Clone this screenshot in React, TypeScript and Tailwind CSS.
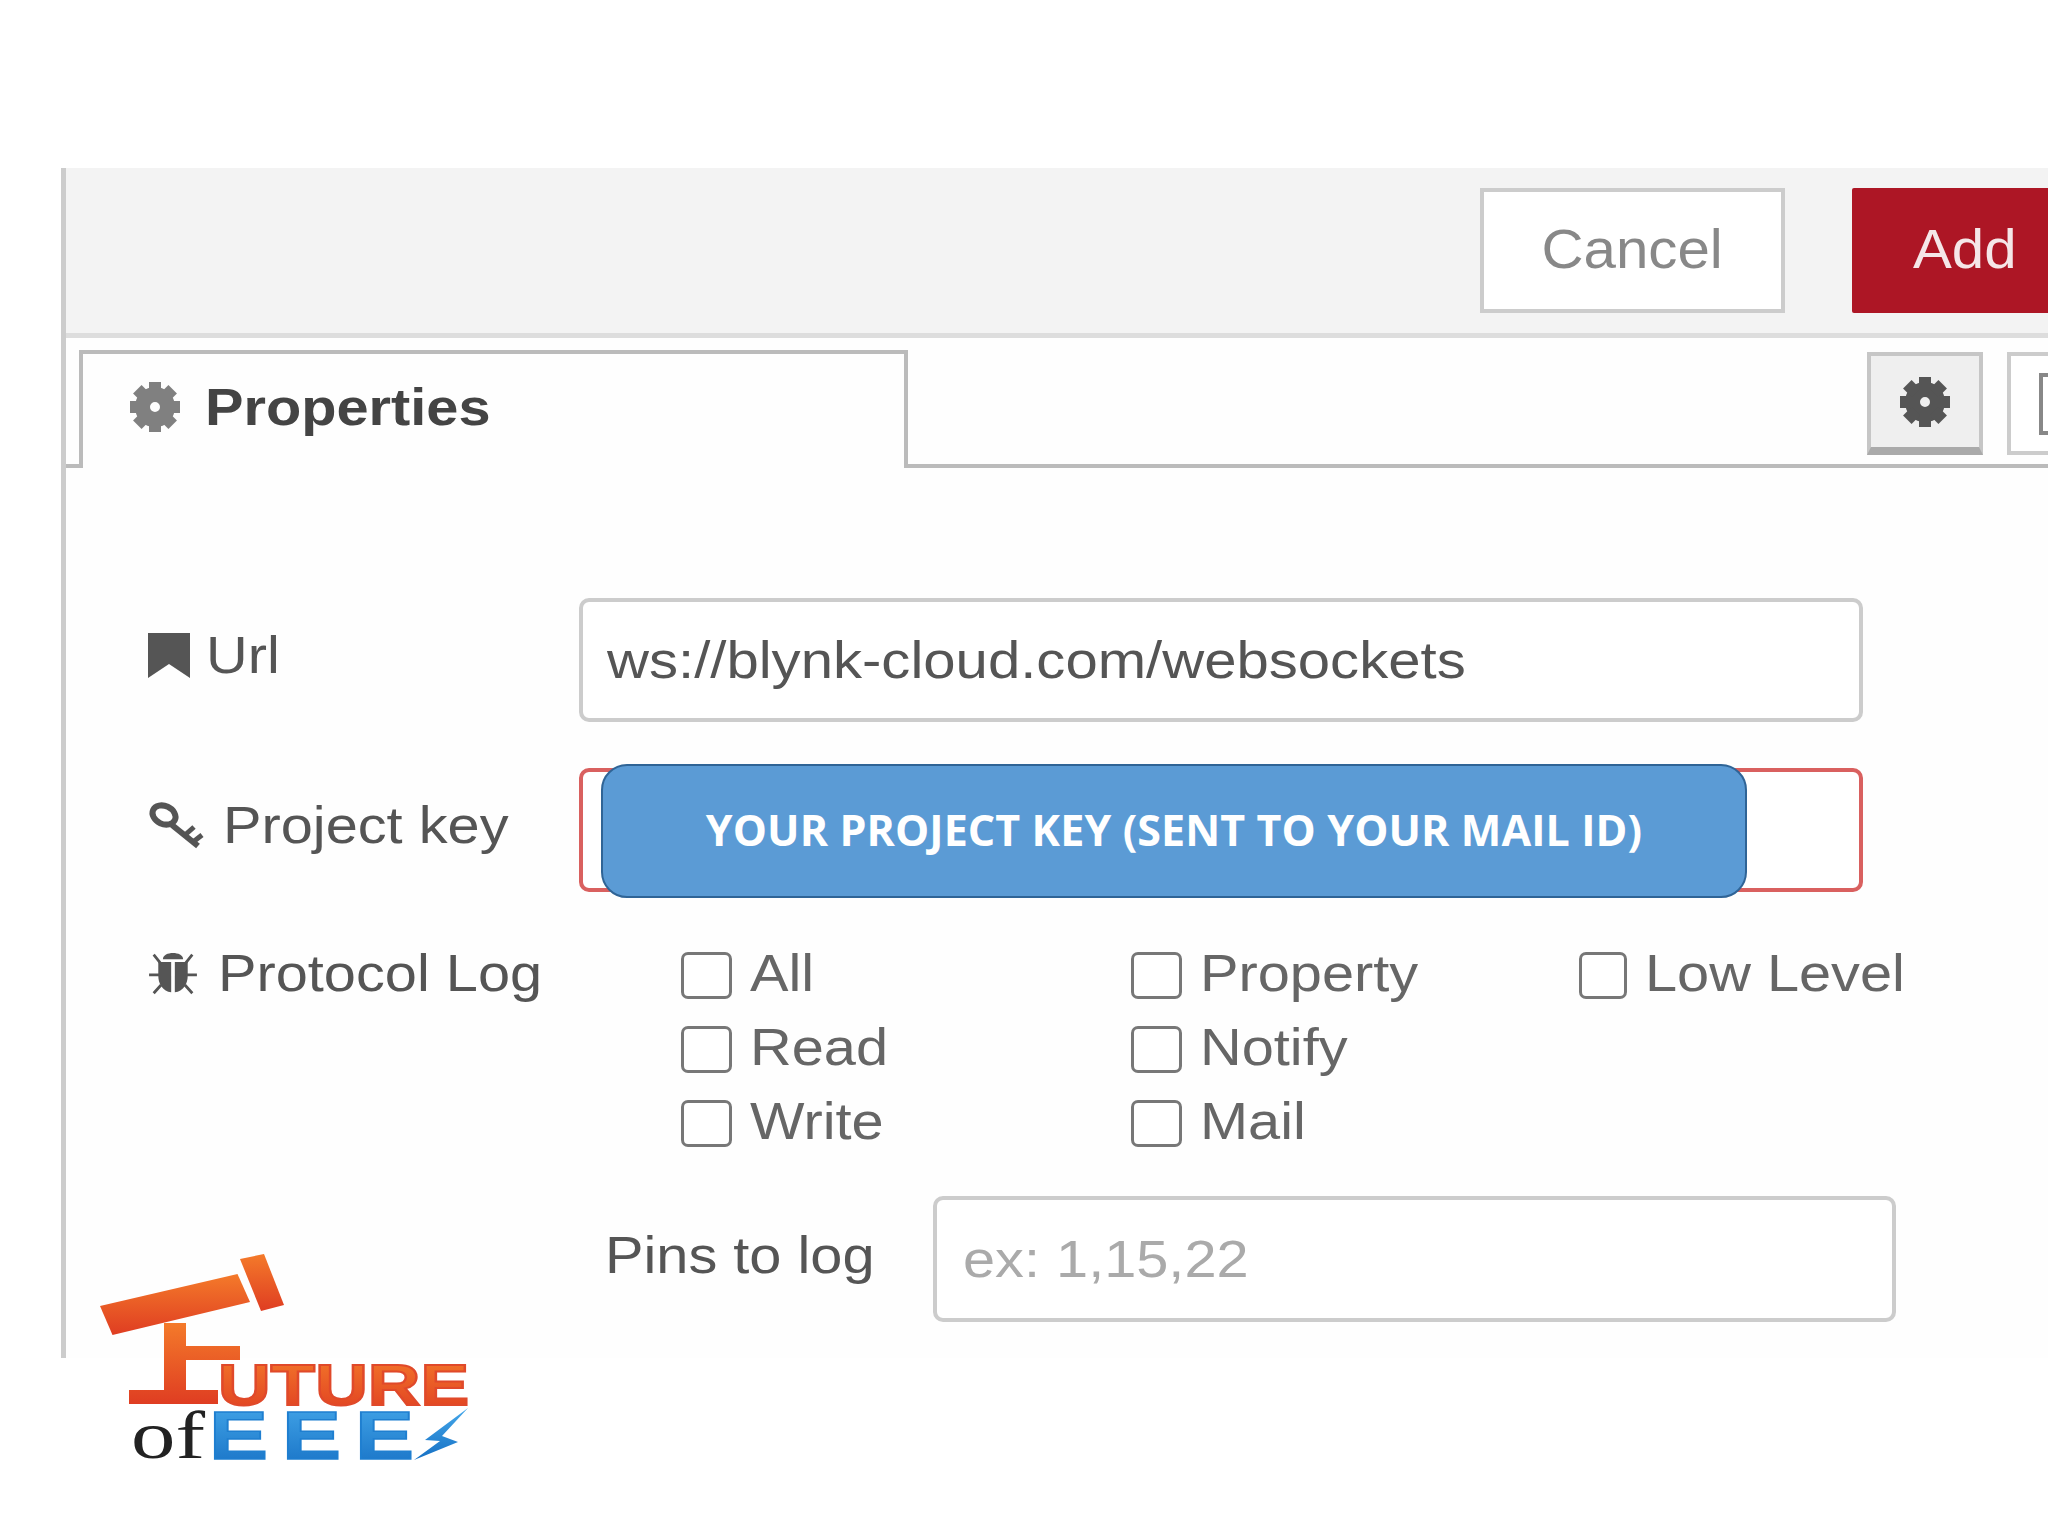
const sans = "font-['Liberation_Sans',Arial,sans-serif]";
const stretched = "inline-block origin-left scale-x-[1.11] whitespace-nowrap";

const logOptions = ["All", "Property", "Low Level", "Read", "Notify", "", "Write", "Mail", ""];

function CogIcon({ className }: { className: string }) {
  return (
    <svg viewBox="0 0 50 50" className={className} fill="currentColor">
      <circle cx="25" cy="25" r="12.5" fill="none" stroke="currentColor" strokeWidth="15" />
      {[0, 45, 90, 135, 180, 225, 270, 315].map((deg) => (
        <rect key={deg} x="19" y="0" width="12" height="12" transform={`rotate(${deg} 25 25)`} />
      ))}
    </svg>
  );
}

function BookmarkIcon() {
  return (
    <svg viewBox="0 0 42 46" className="h-[46px] w-[42px] text-[#555]" fill="currentColor">
      <path d="M0 1 H42 V46 L21 32 L0 46 Z" />
    </svg>
  );
}

function KeyIcon() {
  return (
    <svg viewBox="0 0 56 48" className="h-[48px] w-[56px] text-[#555]" fill="none" stroke="currentColor">
      <ellipse cx="16" cy="14" rx="12" ry="9" strokeWidth="6" transform="rotate(25 16 14)" />
      <path d="M24 24 L50 45" strokeWidth="6" />
      <path d="M37 34 L46 26 M45 41 L54 34" strokeWidth="5" />
    </svg>
  );
}

function BugIcon() {
  return (
    <svg viewBox="0 0 52 50" className="h-[46px] w-[50px] text-[#555]" fill="currentColor">
      <path d="M15 10 C15 1 37 1 37 10 Z" />
      <path d="M10 13 H24 V46 C15 45 10 37 10 28 Z" />
      <path d="M28 13 H42 V28 C42 37 37 45 28 46 Z" />
      <path d="M5 5 L13 15 M47 5 L39 15 M0 27 H12 M52 27 H40 M5 47 L13 38 M47 47 L39 38" stroke="currentColor" strokeWidth="3" fill="none" />
    </svg>
  );
}

function Logo() {
  return (
    <svg viewBox="0 0 400 240" className="absolute left-[90px] top-[1250px] h-[240px] w-[400px]">
      <defs>
        <linearGradient id="orange" x1="0" y1="0" x2="0" y2="1">
          <stop offset="0" stopColor="#f47a2a" />
          <stop offset="1" stopColor="#df3d22" />
        </linearGradient>
        <linearGradient id="blue" x1="0" y1="0" x2="0" y2="1">
          <stop offset="0" stopColor="#45a8ea" />
          <stop offset="1" stopColor="#1670c4" />
        </linearGradient>
      </defs>
      <polygon points="10,56 147.5,24 160,52 22.5,85" fill="url(#orange)" />
      <polygon points="150,9 174,4 194,55 171,61" fill="url(#orange)" />
      <path d="M74 73 H96 V96 H150 V110 H96 V140 H128 V154 H39 V140 H74 Z" fill="url(#orange)" />
      <text x="128" y="155" fontFamily="Liberation Sans, Arial, sans-serif" fontWeight="700" fontSize="58" textLength="251" lengthAdjust="spacingAndGlyphs" fill="url(#orange)" stroke="#e0492a" strokeWidth="2">UTURE</text>
      <text x="41" y="208" fontFamily="Liberation Serif, serif" fontSize="68" textLength="74" lengthAdjust="spacingAndGlyphs" fill="#222">of</text>
      {[119, 192, 265].map((x) => (
        <text key={x} x={x} y="209" fontFamily="Liberation Sans, Arial, sans-serif" fontWeight="700" fontSize="68" textLength="59" lengthAdjust="spacingAndGlyphs" fill="url(#blue)" stroke="#1f7fd0" strokeWidth="1.5">E</text>
      ))}
      <polygon points="378,158 335,190 350,191 324,210 368,192 352,186" fill="url(#blue)" />
    </svg>
  );
}

export default function App() {
  return (
    <div className={`relative h-[1536px] w-[2048px] overflow-hidden bg-white ${sans}`}>
      <div className="ml-[61px] mt-[168px] h-[1190px] w-[2100px] border-l-[5px] border-[#ccc] bg-[#fefefe]">
        <div className="flex h-[170px] items-start border-b-[5px] border-[#ddd] bg-[#f3f3f3] pl-[1414px] pt-[20px]">
          <button className="flex h-[125px] w-[305px] items-center justify-center border-[4px] border-[#ccc] bg-white pb-[4px] text-[56px] text-[#888]">
            <span className="inline-block scale-x-[1.04]">Cancel</span>
          </button>
          <button className="ml-[67px] flex h-[125px] w-[300px] items-center justify-start rounded-[2px] bg-[#ad1625] pb-[4px] pl-[61px] text-[56px] text-[#f5e6e8]">
            <span className="inline-block origin-left scale-x-[1.04]">Add</span>
          </button>
        </div>

        <div className="flex h-[130px] items-end border-b-4 border-[#bbb] pl-[13px]">
          <div className="-mb-1 flex h-[118px] w-[829px] items-center gap-[25px] border-x-4 border-t-4 border-[#bbb] bg-[#fefefe] pb-[9px] pl-[47px]">
            <CogIcon className="h-[50px] w-[50px] text-[#808080]" />
            <span className={`${stretched} text-[52px] font-bold text-[#444]`}>Properties</span>
          </div>
          <div className="mb-[9px] ml-[959px] flex h-[103px] w-[116px] items-center justify-center border-x-4 border-t-4 border-b-[8px] border-x-[#c6c6c6] border-t-[#c6c6c6] border-b-[#aaa] bg-[#efefef]">
            <CogIcon className="h-[50px] w-[50px] text-[#555]" />
          </div>
          <div className="mb-[9px] ml-[24px] flex h-[103px] w-[116px] items-center border-4 border-[#ccc] bg-white pl-[28px]">
            <div className="h-[62px] w-[40px] border-4 border-[#888]" />
          </div>
        </div>

        <div className="pl-[82px] pt-[130px]">
          <div className="flex items-center">
            <div className="flex w-[431px] items-center gap-[16px] pb-[10px] text-[52px] text-[#555]">
              <BookmarkIcon />
              <span className={stretched}>Url</span>
            </div>
            <div className="flex h-[124px] w-[1284px] items-center rounded-[10px] border-[4px] border-[#ccc] bg-white pl-[24px] text-[52px] text-[#555]">
              <span className="inline-block origin-left scale-x-[1.117] whitespace-nowrap">ws://blynk-cloud.com/websockets</span>
            </div>
          </div>

          <div className="mt-[46px] flex items-center">
            <div className="flex w-[431px] items-center gap-[19px] pb-[10px] text-[52px] text-[#555]">
              <KeyIcon />
              <span className={stretched}>Project key</span>
            </div>
            <div className="relative h-[124px] w-[1284px] rounded-[10px] border-[4px] border-[#d9605f] bg-white">
              <div className="absolute -top-[8px] left-[18px] flex h-[134px] w-[1146px] items-center justify-center rounded-[26px] border-2 border-[#2f6496] bg-[#5b9bd5] pb-[2px] font-['Open_Sans',sans-serif] text-[43px] font-bold tracking-[0.1px] text-white">
                YOUR PROJECT KEY (SENT TO YOUR MAIL ID)
              </div>
            </div>
          </div>

          <div className="mt-[46px] flex">
            <div className="flex h-[74px] w-[533px] items-center gap-[20px] pb-[4px] text-[52px] text-[#555]">
              <BugIcon />
              <span className={stretched}>Protocol Log</span>
            </div>
            <div className="grid grid-cols-[450px_448px_300px] auto-rows-[74px] text-[52px] text-[#666]">
              {logOptions.map((label, i) =>
                label ? (
                  <div key={i} className="flex items-center gap-[18px]">
                    <span className="h-[47px] w-[51px] rounded-[7px] border-[3px] border-[#777] bg-white" />
                    <span className={`${stretched} -translate-y-[2px]`}>{label}</span>
                  </div>
                ) : (
                  <div key={i} />
                ),
              )}
            </div>
          </div>

          <div className="mt-[36px] flex items-center pl-[457px]">
            <span className={`${stretched} w-[328px] pb-[8px] text-[52px] text-[#555]`}>Pins to log</span>
            <div className="flex h-[126px] w-[963px] items-center rounded-[10px] border-[4px] border-[#ccc] bg-white pl-[26px] text-[52px] text-[#aaa]">
              <span className={stretched}>ex: 1,15,22</span>
            </div>
          </div>
        </div>
      </div>
      <Logo />
    </div>
  );
}
